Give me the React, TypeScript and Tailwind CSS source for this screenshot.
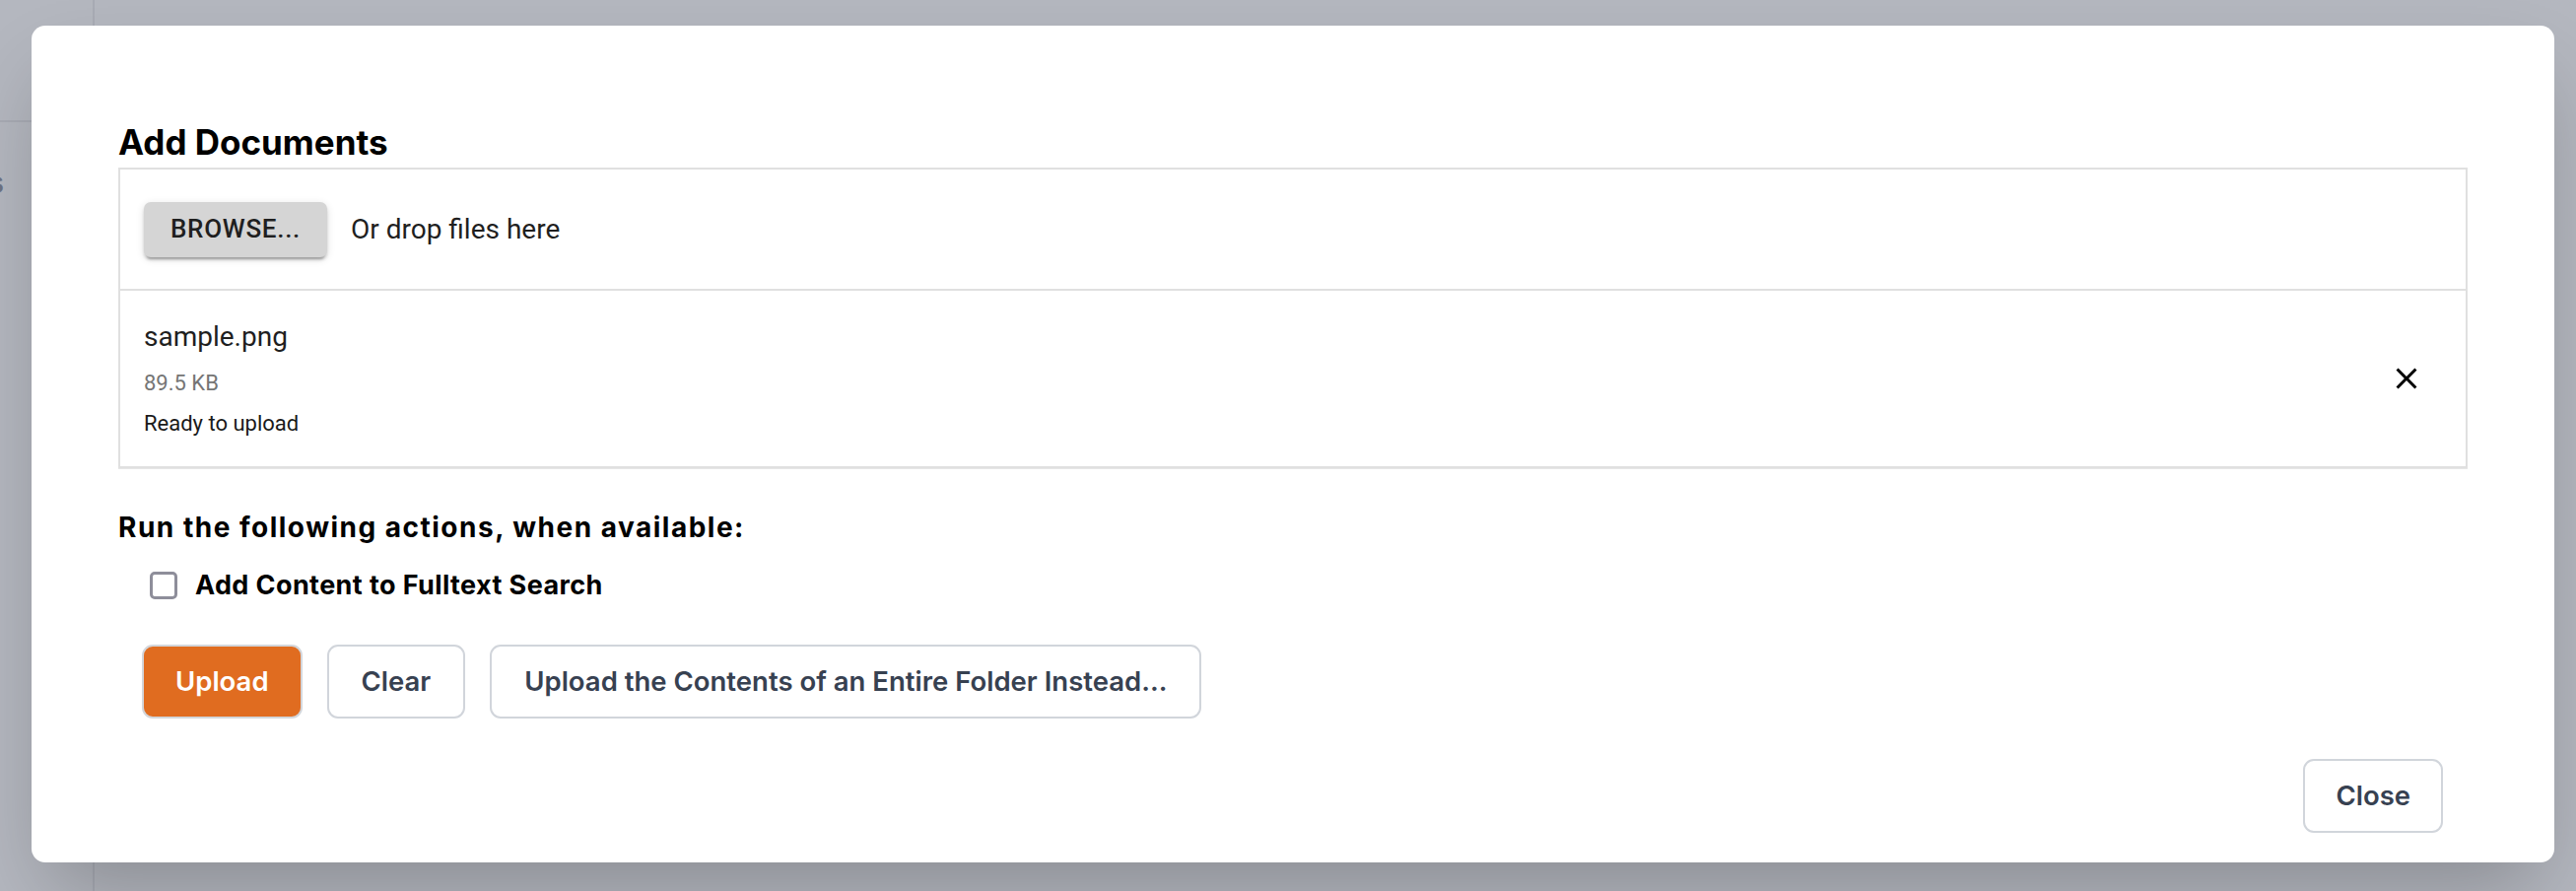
import React from "react";

const inter = { fontFamily: "Inter, 'Liberation Sans', sans-serif" };
const roboto = { fontFamily: "Roboto, 'Liberation Sans', sans-serif" };

export default function App() {
  return (
    <div className="relative w-[2614px] h-[904px] overflow-hidden bg-[#b4b7bf]" style={inter}>
      {/* dimmed page behind the dialog */}
      <div className="flex h-full">
        <div className="w-[96px] h-full border-r-2 border-[#a8abb4] flex flex-col overflow-hidden">
          <div className="h-[124px] border-b-2 border-[#a8abb4]" />
          <div className="flex justify-end pt-[46px] pr-[90px]">
            <span className="text-[30px] font-semibold text-[#6d7384] leading-none">s</span>
          </div>
        </div>
        <div className="flex-1" />
      </div>

      {/* dialog */}
      <div className="absolute left-[32px] top-[26px] w-[2560px] h-[849px] bg-white rounded-[14px] shadow-[0_40px_80px_-16px_rgba(0,0,0,0.24)] px-[88px] pt-[98px] flex flex-col">
        <h2 className="text-[35px] leading-[40px] font-bold text-black">Add Documents</h2>

        <div className="mt-[6px] border-2 border-[#e0e0e0] shadow-[0_1px_0_#e6e6e6]" style={roboto}>
          <div className="h-[123px] flex items-center pl-[24px] border-b-2 border-[#e0e0e0]">
            <button className="h-[56px] px-[27px] rounded-[7px] bg-[#d5d5d5] text-[26px] font-medium tracking-[0.7px] text-[#1f1f1f] shadow-[0_5px_2px_-3px_rgba(0,0,0,0.2),0_3px_3px_0_rgba(0,0,0,0.14),0_2px_9px_0_rgba(0,0,0,0.12)]">
              BROWSE...
            </button>
            <span className="ml-[24px] text-[28px] text-[#1f1f1f]">Or drop files here</span>
          </div>
          <div className="flex items-center pl-[24px] pr-[42px] pt-[29px] pb-[30px]">
            <div className="flex-1 flex flex-col">
              <div className="text-[28px] leading-[36px] text-[#1f1f1f]">sample.png</div>
              <div className="mt-[16px] text-[22px] leading-[25px] text-[#757575]">89.5 KB</div>
              <div className="mt-[16px] text-[22px] leading-[26px] text-[#1a1a1a]">Ready to upload</div>
            </div>
            <svg width="36" height="36" viewBox="0 0 24 24" className="shrink-0">
              <path
                fill="#000"
                d="M19 6.41 17.59 5 12 10.59 6.41 5 5 6.41 10.59 12 5 17.59 6.41 19 12 13.41 17.59 19 19 17.59 13.41 12z"
              />
            </svg>
          </div>
        </div>

        <div className="mt-[44px] text-[28px] leading-[32px] font-bold tracking-[1.5px] text-black">
          Run the following actions, when available:
        </div>

        <label className="mt-[27px] ml-[32px] h-[32px] flex items-center gap-[18px]">
          <span className="w-[28px] h-[28px] rounded-[5px] border-[3px] border-[#8e8e9a] bg-white" />
          <span className="text-[27px] font-bold tracking-[0.4px] text-black">Add Content to Fulltext Search</span>
        </label>

        <div className="mt-[44px] ml-[24px] flex gap-[25px]">
          <button className="h-[75px] px-[32px] rounded-[11px] border-2 border-[#d3d6db] bg-[#e06c20] text-white text-[27.5px] font-semibold">
            Upload
          </button>
          <button className="h-[75px] px-[33px] rounded-[11px] border-2 border-[#d1d5db] bg-white text-[#374151] text-[27.5px] font-semibold">
            Clear
          </button>
          <button className="h-[75px] px-[33px] rounded-[11px] border-2 border-[#d1d5db] bg-white text-[#374151] text-[27.5px] font-semibold">
            Upload the Contents of an Entire Folder Instead...
          </button>
        </div>

        <div className="mt-[41px] mr-[25px] flex justify-end">
          <button className="h-[75px] px-[31px] rounded-[11px] border-2 border-[#d1d5db] bg-white text-[#374151] text-[27.5px] font-semibold">
            Close
          </button>
        </div>
      </div>
    </div>
  );
}
